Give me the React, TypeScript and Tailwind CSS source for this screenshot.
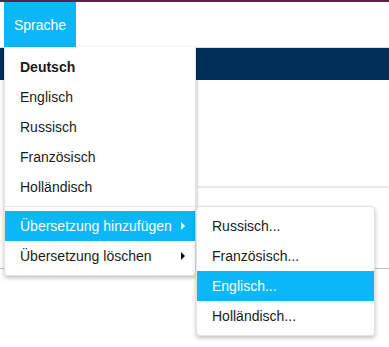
import React from "react";

const languages = ["Deutsch", "Englisch", "Russisch", "Französisch", "Holländisch"];
const subItems = ["Russisch...", "Französisch...", "Englisch...", "Holländisch..."];

function Caret({ white }: { white?: boolean }) {
  return (
    <span
      className={`absolute right-[10px] top-1/2 -translate-y-1/2 w-0 h-0 border-y-[4px] border-y-transparent border-l-[4px] ${
        white ? "border-l-white" : "border-l-black"
      }`}
    />
  );
}

export default function App() {
  return (
    <div
      className="w-[389px] h-[347px] bg-white overflow-hidden relative text-[14px] text-[#1b1b1b]"
      style={{ fontFamily: '"Liberation Sans", Arial, sans-serif' }}
    >
      <div className="h-[2px] bg-[#5c2147]" />

      <nav className="h-[46px] border-b border-[#dcdcdc] pl-[4px] flex">
        <div className="relative">
          <button className="h-[45px] w-[72px] bg-[#0bb7f7] text-white text-left pl-[10px] pt-[2px]">
            Sprache
          </button>

          {/* main dropdown */}
          <div className="absolute left-0 top-[45px] z-20 w-[192px] bg-white border border-[#e2e2e2] border-t-0 rounded-b-[4px] shadow-[0_2px_4px_rgba(0,0,0,0.25)] pt-[5px] pb-[4px]">
            {languages.map((l, i) => (
              <div key={l} className={`h-[30px] flex items-center pl-[15px] ${i === 0 ? "font-bold" : ""}`}>
                {l}
              </div>
            ))}
            <div className="h-px bg-[#e5e5e5] my-[4px]" />
            <div className="relative h-[30px] flex items-center pl-[15px] bg-[#0bb7f7] text-white">
              Übersetzung hinzufügen
              <Caret white />

              {/* submenu */}
              <div className="absolute left-[191px] top-[-5px] w-[179px] bg-white text-[#1b1b1b] border border-[#e2e2e2] rounded-[4px] shadow-[0_2px_4px_rgba(0,0,0,0.25)] py-[4px]">
                {subItems.map((s, i) => (
                  <div
                    key={s}
                    className={`h-[30px] flex items-center pl-[15px] ${i === 2 ? "bg-[#0bb7f7] text-white" : ""}`}
                  >
                    {s}
                  </div>
                ))}
              </div>
            </div>
            <div className="relative h-[30px] flex items-center pl-[15px]">
              Übersetzung löschen
              <Caret />
            </div>
          </div>
        </div>
      </nav>

      <div className="h-[32px] bg-[#00305a]" />

      <div className="flex h-[108px]">
        <div className="w-[197px]" />
        <div className="flex-1 border-l border-[#ececec] border-b-2 border-b-[#ececec]" />
      </div>

      <div className="flex h-[80px]">
        <div className="w-[197px]" />
        <div className="flex-1 border-l border-[#ececec]" />
      </div>
      <div className="h-px bg-[#c4c4c4]" />
    </div>
  );
}
